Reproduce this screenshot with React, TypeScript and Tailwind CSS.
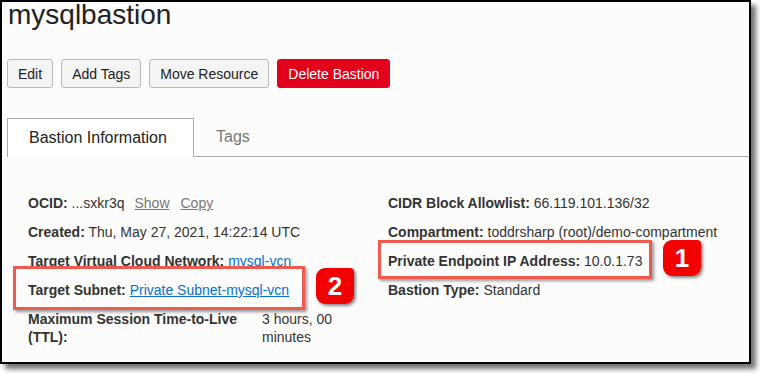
import React from "react";

const font = { fontFamily: '"Liberation Sans", Arial, sans-serif' };

function Btn({ children, danger }: { children: React.ReactNode; danger?: boolean }) {
  return (
    <button
      className={`h-[29px] px-[10px] rounded-[3px] border text-[14px] leading-none ${
        danger ? "bg-[#e3001b] border-[#e3001b] text-white" : "bg-[#f4f4f4] border-[#b9b9b9] text-[#222]"
      }`}
    >
      {children}
    </button>
  );
}

function Badge({ n }: { n: string }) {
  return (
    <div className="w-[38px] h-[36px] bg-[#f50000] rounded-[9px] rounded-tr-[4px] shadow-[2px_2px_3px_rgba(0,0,0,0.45)] flex items-center justify-center text-white font-bold text-[26px] leading-none">
      {n}
    </div>
  );
}

export default function App() {
  return (
    <div className="w-[760px] h-[374px] bg-white text-[#333]" style={font}>
      <div className="relative w-[751px] h-[364px] border-2 border-black bg-[#fcfcfc] overflow-hidden shadow-[5px_5px_5px_rgba(0,0,0,0.55)]">
        <h1 className="ml-[6px] mt-[-3px] text-[28px] leading-[32px] text-[#222]">mysqlbastion</h1>

        <div className="mt-[28px] ml-[5px] flex gap-[8px]">
          <Btn>Edit</Btn>
          <Btn>Add Tags</Btn>
          <Btn>Move Resource</Btn>
          <Btn danger>Delete Bastion</Btn>
        </div>

        <div className="mt-[30px] ml-[5px] flex items-end">
          <div className="w-[187px] h-[39px] pl-[21px] border border-b-0 border-[#aaa] bg-white flex items-center text-[16px] text-[#222]">
            Bastion Information
          </div>
          <div className="flex-1 h-[39px] border-b border-[#aaa] flex items-center pl-[22px] text-[16px] text-[#777]">
            Tags
          </div>
        </div>

        <div className="mt-[37px] ml-[26px] flex text-[14px] leading-[18px]">
          <div className="w-[360px] flex flex-col gap-[11px]">
            <div>
              <b>OCID:</b> ...sxkr3q
              <span className="ml-[10px] text-[#777] underline">Show</span>
              <span className="ml-[11px] text-[#777] underline">Copy</span>
            </div>
            <div>
              <b>Created:</b> Thu, May 27, 2021, 14:22:14 UTC
            </div>
            <div>
              <b>Target Virtual Cloud Network:</b> <span className="text-[#0a6fd1] underline">mysql-vcn</span>
            </div>
            <div>
              <b>Target Subnet:</b> <span className="text-[#0a6fd1] underline">Private Subnet-mysql-vcn</span>
            </div>
            <div className="flex">
              <b className="w-[234px]">Maximum Session Time-to-Live (TTL):</b>
              <span className="w-[98px]">3 hours, 00 minutes</span>
            </div>
          </div>
          <div className="flex flex-col gap-[11px]">
            <div>
              <b>CIDR Block Allowlist:</b> 66.119.101.136/32
            </div>
            <div>
              <b>Compartment:</b> toddrsharp (root)/demo-compartment
            </div>
            <div>
              <b>Private Endpoint IP Address:</b> 10.0.1.73
            </div>
            <div>
              <b>Bastion Type:</b> Standard
            </div>
          </div>
        </div>

        {/* callouts */}
        <div className="absolute left-[11px] top-[264px] w-[292px] h-[44px] border-[3px] border-[#ef5a4e] shadow-[2px_2px_3px_rgba(0,0,0,0.4)]" />
        <div className="absolute left-[314px] top-[266px]">
          <Badge n="2" />
        </div>
        <div className="absolute left-[376px] top-[238px] w-[274px] h-[39px] border-[3px] border-[#ef5a4e] shadow-[2px_2px_3px_rgba(0,0,0,0.4)]" />
        <div className="absolute left-[661px] top-[238px]">
          <Badge n="1" />
        </div>
      </div>
    </div>
  );
}
